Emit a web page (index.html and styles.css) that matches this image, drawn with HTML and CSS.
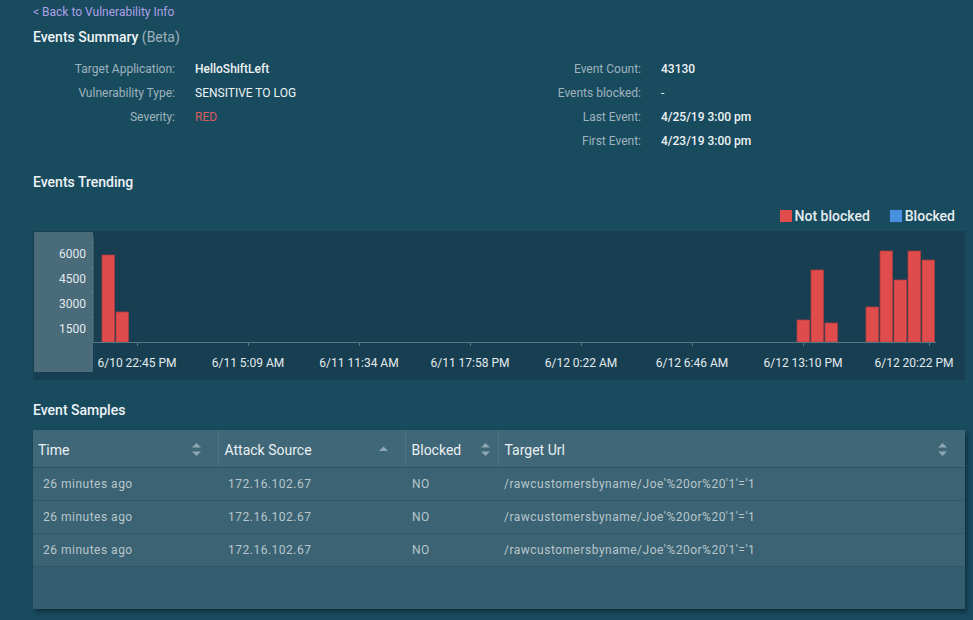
FILE: index.html
```html
<!DOCTYPE html>
<html>
<head>
<meta charset="utf-8">
<link rel="stylesheet" href="styles.css">
</head>
<body>
<div class="page">
  <a class="back" href="#">&lt; Back to Vulnerability Info</a>
  <h1 class="title">Events Summary <span class="beta">(Beta)</span></h1>

  <div class="summary">
    <div class="sgrid left">
      <div class="lbl">Target Application:</div><div class="val strong">HelloShiftLeft</div>
      <div class="lbl">Vulnerability Type:</div><div class="val">SENSITIVE TO LOG</div>
      <div class="lbl">Severity:</div><div class="val red">RED</div>
    </div>
    <div class="sgrid right">
      <div class="lbl">Event Count:</div><div class="val strong">43130</div>
      <div class="lbl">Events blocked:</div><div class="val">-</div>
      <div class="lbl">Last Event:</div><div class="val strong">4/25/19 3:00 pm</div>
      <div class="lbl">First Event:</div><div class="val strong">4/23/19 3:00 pm</div>
    </div>
  </div>

  <h2 class="section trending">Events Trending</h2>
  <div class="legend">
    <span class="key"><i class="sw sw-red"></i>Not blocked</span>
    <span class="key"><i class="sw sw-blue"></i>Blocked</span>
  </div>

  <div class="chart">
    <svg width="932" height="149" viewBox="0 0 932 149">
      <rect x="1" y="1" width="59" height="140" fill="#4a6b7a"/>
      <g stroke="#5e7d8a" stroke-width="1">
        <line x1="57" y1="11.5" x2="60" y2="11.5"/>
        <line x1="57" y1="36.5" x2="60" y2="36.5"/>
        <line x1="57" y1="61.5" x2="60" y2="61.5"/>
        <line x1="57" y1="86.5" x2="60" y2="86.5"/>
        <line x1="60.5" y1="6" x2="60.5" y2="111" stroke="#3f5f6d"/>
      </g>
      <g class="ylbl" text-anchor="end">
        <text x="53" y="27">6000</text>
        <text x="53" y="52">4500</text>
        <text x="53" y="77">3000</text>
        <text x="53" y="102">1500</text>
      </g>
      <g fill="#e04c4c" stroke="#a83c40" stroke-width="0.8">
        <rect x="69" y="24" width="12.5" height="87"/>
        <rect x="83" y="81" width="12.5" height="30"/>
        <rect x="764" y="89" width="12.5" height="22"/>
        <rect x="778" y="39" width="12.5" height="72"/>
        <rect x="792" y="92" width="12.5" height="19"/>
        <rect x="833" y="76" width="12.5" height="35"/>
        <rect x="847" y="20" width="12.5" height="91"/>
        <rect x="861" y="49" width="12.5" height="62"/>
        <rect x="875" y="20" width="12.5" height="91"/>
        <rect x="889" y="29" width="12.5" height="82"/>
      </g>
      <line x1="60" y1="111.5" x2="903" y2="111.5" stroke="#5a7884" stroke-width="1.2"/>
      <g stroke="#5a7884" stroke-width="1">
        <line x1="104.5" y1="111" x2="104.5" y2="115"/>
        <line x1="215.5" y1="111" x2="215.5" y2="115"/>
        <line x1="326.5" y1="111" x2="326.5" y2="115"/>
        <line x1="437.5" y1="111" x2="437.5" y2="115"/>
        <line x1="548.5" y1="111" x2="548.5" y2="115"/>
        <line x1="659.5" y1="111" x2="659.5" y2="115"/>
        <line x1="770.5" y1="111" x2="770.5" y2="115"/>
        <line x1="896.5" y1="111" x2="896.5" y2="115"/>
      </g>
      <g class="xlbl" text-anchor="middle">
        <text x="104" y="136">6/10 22:45 PM</text>
        <text x="215" y="136">6/11 5:09 AM</text>
        <text x="326" y="136">6/11 11:34 AM</text>
        <text x="437" y="136">6/11 17:58 PM</text>
        <text x="548" y="136">6/12 0:22 AM</text>
        <text x="659" y="136">6/12 6:46 AM</text>
        <text x="770" y="136">6/12 13:10 PM</text>
        <text x="881" y="136">6/12 20:22 PM</text>
      </g>
    </svg>
  </div>

  <h2 class="section samples">Event Samples</h2>

  <div class="tablewrap">
    <table class="grid">
      <colgroup>
        <col class="c1"><col class="c2"><col class="c3"><col class="c4">
      </colgroup>
      <thead>
        <tr>
          <th class="h1"><div class="hc"><span>Time</span><svg class="sort" width="9" height="13" viewBox="0 0 9 13"><polygon points="0,4.5 4.5,0 9,4.5"/><polygon points="0,8.5 9,8.5 4.5,13"/></svg></div></th>
          <th class="h2"><div class="hc"><span>Attack Source</span><svg class="sort" width="9" height="13" viewBox="0 0 9 13"><polygon points="0,8 4.5,3.5 9,8"/></svg></div></th>
          <th class="h3"><div class="hc"><span>Blocked</span><svg class="sort" width="9" height="13" viewBox="0 0 9 13"><polygon points="0,4.5 4.5,0 9,4.5"/><polygon points="0,8.5 9,8.5 4.5,13"/></svg></div></th>
          <th class="h4"><div class="hc"><span>Target Url</span><svg class="sort" width="9" height="13" viewBox="0 0 9 13"><polygon points="0,4.5 4.5,0 9,4.5"/><polygon points="0,8.5 9,8.5 4.5,13"/></svg></div></th>
        </tr>
      </thead>
      <tbody>
        <tr><td class="d1">26 minutes ago</td><td class="d2">172.16.102.67</td><td class="d3">NO</td><td class="d4">/rawcustomersbyname/Joe'%20or%20'1'='1</td></tr>
        <tr><td class="d1">26 minutes ago</td><td class="d2">172.16.102.67</td><td class="d3">NO</td><td class="d4">/rawcustomersbyname/Joe'%20or%20'1'='1</td></tr>
        <tr><td class="d1">26 minutes ago</td><td class="d2">172.16.102.67</td><td class="d3">NO</td><td class="d4">/rawcustomersbyname/Joe'%20or%20'1'='1</td></tr>
      </tbody>
    </table>
    <div class="empty"></div>
  </div>
</div>
</body>
</html>
```

FILE: styles.css
```css
html, body {
  margin: 0;
  padding: 0;
}
body {
  background: #194b5f;
  font-family: Roboto, "Liberation Sans", sans-serif;
  color: #e8eef1;
  height: 620px;
  overflow: hidden;
}
.page {
  padding: 4px 8px 0 33px;
}
.back {
  display: block;
  font-size: 12px;
  line-height: 16px;
  color: #ad9fe6;
  text-decoration: none;
}
.title {
  margin: 7px 0 0;
  font-size: 14px;
  line-height: 20px;
  font-weight: 500;
  color: #eef3f5;
}
.beta {
  font-weight: 400;
  color: #9fb2bb;
}
.summary {
  display: flex;
  margin-top: 10px;
}
.sgrid {
  display: grid;
  column-gap: 20px;
  grid-auto-rows: 24px;
  align-items: center;
  font-size: 12px;
}
.sgrid.left {
  width: 447px;
  grid-template-columns: 142px auto;
  align-content: start;
}
.sgrid.right {
  grid-template-columns: 161px auto;
}
.lbl {
  text-align: right;
  color: #9fb3bc;
}
.val {
  color: #eef3f5;
}
.val.strong {
  font-weight: 500;
}
.val.red {
  color: #d85c5c;
}
.section {
  margin: 0;
  font-size: 14px;
  line-height: 20px;
  font-weight: 500;
  color: #eef3f5;
}
.trending {
  margin-top: 19px;
}
.legend {
  display: flex;
  justify-content: flex-end;
  gap: 20px;
  margin-top: 14px;
  padding-right: 10px;
  height: 20px;
  align-items: center;
  font-size: 14px;
  font-weight: 500;
  color: #e6edf0;
}
.key {
  display: flex;
  align-items: center;
  gap: 3px;
}
.sw {
  display: inline-block;
  width: 12px;
  height: 12px;
}
.sw-red { background: #e04c4c; }
.sw-blue { background: #4a8fe0; }
.chart {
  margin-top: 5px;
  height: 149px;
  width: 932px;
  background: #173f51;
}
.chart svg {
  display: block;
}
.ylbl text, .xlbl text {
  font-family: Roboto, "Liberation Sans", sans-serif;
  font-size: 12px;
  fill: #e3eaee;
}
.samples {
  margin-top: 20px;
}
.tablewrap {
  margin-top: 10px;
  width: 932px;
  background: #345e6f;
  box-shadow: 2px 3px 4px rgba(5, 25, 35, 0.55);
}
.grid {
  width: 100%;
  border-collapse: collapse;
  table-layout: fixed;
}
.c1 { width: 185px; }
.c2 { width: 187px; }
.c3 { width: 93px; }
.grid th {
  height: 37px;
  padding: 0;
  background: #3f6777;
  border-bottom: 1px solid #2d5464;
  border-left: 1px solid #4c7282;
  font-size: 14px;
  font-weight: 400;
  text-align: left;
  color: #eaf0f3;
}
.grid th.h1 { border-left: none; }
.hc {
  display: flex;
  align-items: center;
  justify-content: space-between;
  padding-left: 6px;
  padding-right: 17px;
  padding-top: 2px;
}
.h1 .hc { padding-left: 5px; }
.h3 .hc { padding-right: 8px; }
.h4 .hc { padding-right: 18px; }
.sort {
  display: block;
  fill: #8ea7b4;
}
.grid td {
  height: 32px;
  padding: 0;
  background: #3b6373;
  border-bottom: 1px solid #30596a;
  font-size: 12px;
  letter-spacing: 0.5px;
  color: #b8c6cc;
  white-space: nowrap;
}
.grid tbody tr:last-child td {
  border-bottom: 1px solid #2f5767;
}
.d1 { padding-left: 10px !important; }
.d2 { padding-left: 10px !important; }
.d3 { padding-left: 7px !important; }
.d4 { padding-left: 6px !important; }
.empty {
  height: 42px;
}
```
